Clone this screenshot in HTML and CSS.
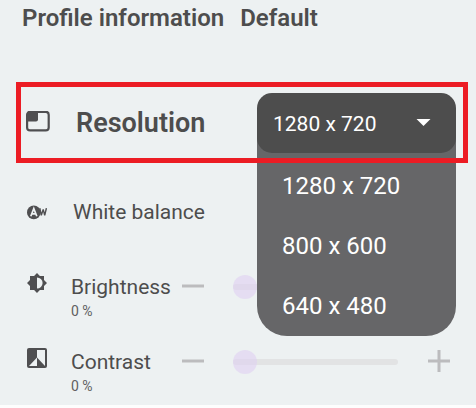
FILE: index.html
```html
<!DOCTYPE html>
<html lang="en">
<head>
  <meta charset="UTF-8">
  <meta name="viewport" content="width=device-width, initial-scale=1.0">
  <title>Profile information</title>
  <link rel="stylesheet" href="styles.css">
</head>
<body>
  <main class="panel">
    <h2 class="title"><span>Profile information</span><span>Default</span></h2>

    <div class="row highlight">
      <svg class="icon" viewBox="0 0 24 24">
        <rect x="1.1" y="0.8" width="21.6" height="18.6" rx="3" fill="none" stroke="currentColor" stroke-width="2.2"/>
        <path d="M1 10.5V3.5q0-3 3-3h8v8q0 2-2 2z" fill="currentColor"/>
      </svg>
      <label class="main-label" for="resolution">Resolution</label>
      <div class="dropdown">
        <div class="select-box">
          <select id="resolution" name="resolution">
            <option>1280 x 720</option>
            <option>800 x 600</option>
            <option>640 x 480</option>
          </select>
          <svg class="arrow" viewBox="0 0 16 8"><path d="M0 0h16L8 8z" fill="currentColor"/></svg>
        </div>
        <div class="menu" role="listbox" aria-label="Resolution">
          <button type="button" role="option" aria-selected="true">1280 x 720</button>
          <button type="button" role="option" aria-selected="false">800 x 600</button>
          <button type="button" role="option" aria-selected="false">640 x 480</button>
        </div>
      </div>
    </div>

    <div class="row balance">
      <svg class="icon small" viewBox="0 0 20 20">
        <circle cx="6.8" cy="10.4" r="6.8" fill="currentColor"/>
        <path d="M3.8 14.2L6.8 6.6l3 7.6M4.8 11.8h4" fill="none" stroke="#edf1f2" stroke-width="1.7"/>
        <path d="M12.8 6.2l1.5 7.2 1.9-6 1.5 6 1.7-7.2" fill="none" stroke="currentColor" stroke-width="1.4" stroke-linejoin="bevel"/>
      </svg>
      <span class="label">White balance</span>
    </div>

    <div class="row adjust">
      <svg class="icon small" viewBox="0 0 20 20">
        <path fill="currentColor" d="M10 0l2.9 3H17v4.1l3 2.9-3 2.9V17h-4.1L10 20l-2.9-3H3v-4.1L0 10l3-2.9V3h4.1z"/>
        <path fill="#edf1f2" d="M10 4.4a5.6 5.6 0 0 1 0 11.2z"/>
      </svg>
      <div class="text">
        <label class="label" for="brightness">Brightness</label>
        <span class="value">0 %</span>
      </div>
      <button class="step" type="button" aria-label="Decrease brightness">
        <svg viewBox="0 0 22 22"><path d="M0 11h22" stroke="currentColor" stroke-width="3"/></svg>
      </button>
      <input class="slider" type="range" id="brightness" min="0" max="100" value="0">
      <button class="step" type="button" aria-label="Increase brightness">
        <svg viewBox="0 0 22 22"><path d="M0 11h22M11 0v22" stroke="currentColor" stroke-width="3"/></svg>
      </button>
    </div>

    <div class="row adjust">
      <svg class="icon small" viewBox="0 0 20 20">
        <rect width="20" height="20" rx="2" fill="currentColor"/>
        <path fill="#edf1f2" d="M10 2h8v16L10 9.4zM10 9.4V18H2z"/>
      </svg>
      <div class="text">
        <label class="label" for="contrast">Contrast</label>
        <span class="value">0 %</span>
      </div>
      <button class="step" type="button" aria-label="Decrease contrast">
        <svg viewBox="0 0 22 22"><path d="M0 11h22" stroke="currentColor" stroke-width="3"/></svg>
      </button>
      <input class="slider" type="range" id="contrast" min="0" max="100" value="0">
      <button class="step" type="button" aria-label="Increase contrast">
        <svg viewBox="0 0 22 22"><path d="M0 11h22M11 0v22" stroke="currentColor" stroke-width="3"/></svg>
      </button>
    </div>
  </main>
</body>
</html>
```
FILE: styles.css
```css
* {
  box-sizing: border-box;
}

body {
  margin: 0;
  background: #fdfdfd;
  color: #4d4d4d;
  font-family: Roboto, "Liberation Sans", sans-serif;
}

.panel {
  background: #edf1f2;
}

.title {
  display: flex;
  gap: 16px;
  margin: 0;
  padding: 4px 22px 50px;
  font-size: 24px;
  line-height: 28px;
  font-weight: 600;
}

.row {
  display: flex;
  align-items: center;
}

.icon {
  flex: none;
  width: 24px;
  height: 24px;
  color: #4f4f51;
}

.icon.small {
  width: 20px;
  height: 20px;
}

/* Resolution */
.highlight {
  position: relative;
  margin: 0 8px 0 16px;
  padding: 11px 12px 10px 10px;
}

/* the frame stays above the open menu */
.highlight::after {
  content: "";
  position: absolute;
  inset: 0;
  z-index: 3;
  border: 5px solid #ec1c24;
  pointer-events: none;
}

.main-label {
  flex: 1;
  padding-left: 26px;
  font-size: 27px;
  line-height: 32px;
  font-weight: 600;
}

.dropdown {
  position: relative;
  width: 199px;
}

.select-box {
  position: relative;
  z-index: 2;
}

.select-box select {
  appearance: none;
  display: block;
  width: 100%;
  height: 60px;
  padding: 2px 16px 0;
  border: none;
  border-radius: 15px;
  background: #4d4d4d;
  color: #ffffff;
  font-family: inherit;
  font-size: 21px;
}

.arrow {
  position: absolute;
  top: 26px;
  right: 25px;
  width: 15px;
  height: 7px;
  color: #ffffff;
  pointer-events: none;
}

.menu {
  position: absolute;
  top: 30px;
  left: 0;
  right: 0;
  z-index: 1;
  padding-top: 33px;
  border-radius: 0 0 30px 30px;
  background: #666668;
}

.menu button {
  display: block;
  width: 100%;
  height: 60px;
  padding: 0 25px;
  border: none;
  background: none;
  color: #ffffff;
  font-family: inherit;
  font-size: 24px;
  text-align: left;
  cursor: pointer;
}

/* Other settings */
.balance {
  padding: 36px 26px 35px 27px;
}

.balance .label {
  padding-left: 26px;
}

.label {
  font-size: 21px;
  line-height: 26px;
}

.adjust {
  align-items: flex-start;
  height: 75px;
  padding: 13px 26px 0 27px;
}

.adjust:last-child {
  height: 70px;
}

.text {
  display: flex;
  flex-direction: column;
  width: 111px;
  margin-left: 24px;
  padding-top: 1px;
}

.value {
  color: #606060;
  font-size: 14px;
  line-height: 22px;
}

.step {
  flex: none;
  width: 22px;
  height: 22px;
  margin-top: 2px;
  padding: 0;
  border: none;
  background: none;
  color: #bcbcbe;
  cursor: pointer;
}

.step svg {
  display: block;
}

.slider {
  appearance: none;
  flex: 1;
  min-width: 0;
  height: 24px;
  margin: 2px 30px 0 29px;
  background: none;
}

.slider::-webkit-slider-runnable-track {
  height: 6px;
  border-radius: 3px;
  background: #e2e3e4;
}

.slider::-webkit-slider-thumb {
  appearance: none;
  width: 24px;
  height: 24px;
  margin-top: -9px;
  border-radius: 50%;
  background: rgba(224, 208, 242, 0.6);
}
```
